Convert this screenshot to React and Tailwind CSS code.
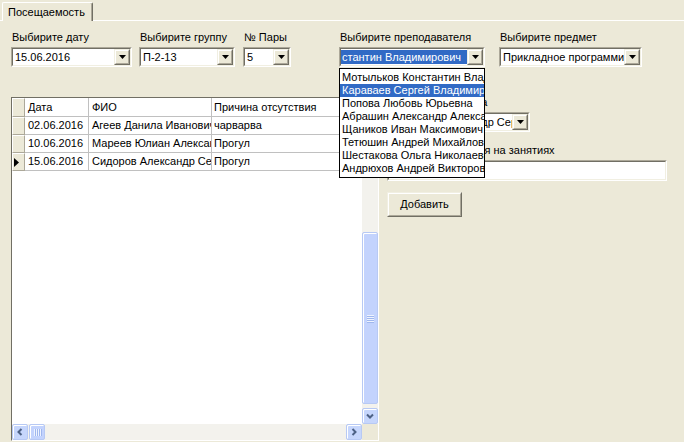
import React from "react";

const teachers = [
  "Мотыльков Константин Владимирович",
  "Караваев Сергей Владимирович",
  "Попова Любовь Юрьевна",
  "Абрашин Александр Александрович",
  "Щаников Иван Максимович",
  "Тетюшин Андрей Михайлович",
  "Шестакова Ольга Николаевна",
  "Андрюхов Андрей Викторович",
];

const rows = [
  ["02.06.2016", "Агеев Данила Иванович", "чарварва"],
  ["10.06.2016", "Мареев Юлиан Александрович", "Прогул"],
  ["15.06.2016", "Сидоров Александр Сергеевич", "Прогул"],
];

function Sunken({ className = "", children }) {
  return (
    <div className={`border border-t-[#aca899] border-l-[#aca899] border-r-white border-b-white ${className}`}>
      <div className="h-full w-full overflow-hidden border border-t-[#716f64] border-l-[#716f64] border-r-[#f1efe2] border-b-[#f1efe2] bg-white">
        {children}
      </div>
    </div>
  );
}

function Raised({ className = "", children }) {
  return (
    <div className={`border border-t-[#f1efe2] border-l-[#f1efe2] border-r-[#716f64] border-b-[#716f64] ${className}`}>
      <div className="flex h-full w-full items-center justify-center border border-t-white border-l-white border-r-[#aca899] border-b-[#aca899] bg-[#ece9d8]">
        {children}
      </div>
    </div>
  );
}

function Combo({ className = "", children, pad = "pl-[2px]" }) {
  return (
    <Sunken className={`h-[20px] ${className}`}>
      <div className="flex h-full">
        <div className={`min-w-0 flex-1 overflow-hidden whitespace-nowrap leading-[16px] ${pad}`}>{children}</div>
        <Raised className="h-[16px] w-[16px] shrink-0">
          <svg width="7" height="4" viewBox="0 0 7 4">
            <path d="M0 0h7L3.5 4z" fill="#000" />
          </svg>
        </Raised>
      </div>
    </Sunken>
  );
}

function Field({ label, className = "", children }) {
  return (
    <div className={className}>
      <div className="h-[13px] whitespace-nowrap pl-[1px] leading-[13px]">{label}</div>
      <div className="mt-[3px]">{children}</div>
    </div>
  );
}

const chevrons = {
  up: "M1 5.5L4 2.5L7 5.5",
  down: "M1 2.5L4 5.5L7 2.5",
  left: "M5.5 1L2.5 4L5.5 7",
  right: "M2.5 1L5.5 4L2.5 7",
};

function ScrollBtn({ dir }) {
  return (
    <div className="flex h-[16px] w-[16px] shrink-0 items-center justify-center rounded-[2px] border border-[#b7c9f4] bg-[#c6d6fc] shadow-[inset_1px_1px_0_#ffffff]">
      <svg width="8" height="8" viewBox="0 0 8 8">
        <path d={chevrons[dir]} fill="none" stroke="#4d6185" strokeWidth="2" />
      </svg>
    </div>
  );
}

function Grip({ vertical }) {
  return (
    <div className={`flex gap-[1px] ${vertical ? "flex-col" : "flex-row"}`}>
      {[0, 1, 2, 3].map((i) => (
        <div key={i} className={vertical ? "h-[1px] w-[7px] bg-[#eef3ff] shadow-[0_1px_0_#9fb7ee]" : "h-[7px] w-[1px] bg-[#eef3ff] shadow-[1px_0_0_#9fb7ee]"} />
      ))}
    </div>
  );
}

export default function App() {
  return (
    <div className="relative h-[442px] w-[684px] overflow-hidden bg-[#ece9d8] font-['Liberation_Sans',Arial,sans-serif] text-[11px] leading-[13px] text-black">
      {/* tab strip */}
      <div className="flex h-[21px]">
        <div className="w-[2px] border-b border-white" />
        <div className="mt-[2px] flex h-[19px] w-[91px] items-center rounded-t-[2px] border-l border-t border-r border-l-white border-t-white border-r-[#716f64] pl-[5px] shadow-[inset_-1px_0_0_#aca899]">
          Посещаемость
        </div>
        <div className="flex-1 border-b border-white" />
      </div>

      {/* filters */}
      <div className="flex pl-[11px] pt-[10px]">
        <Field label="Выбирите дату" className="w-[121px]">
          <Combo>15.06.2016</Combo>
        </Field>
        <Field label="Выбирите группу" className="ml-[7px] w-[96px]">
          <Combo>П-2-13</Combo>
        </Field>
        <Field label="№ Пары" className="ml-[8px] w-[48px]">
          <Combo>5</Combo>
        </Field>
        <Field label="Выбирите преподавателя" className="ml-[48px] w-[146px]">
          <Combo pad="pl-0">
            <div className="my-[1px] h-[14px] bg-[#316ac5] pl-[1px] leading-[14px] text-white">стантин Владимирович</div>
          </Combo>
        </Field>
        <Field label="Выбирите предмет" className="ml-[14px] w-[143px]">
          <Combo>Прикладное программирование</Combo>
        </Field>
      </div>

      {/* main area */}
      <div className="mt-[28px] flex">
        {/* data grid */}
        <div className="ml-[11px] mt-[2px] flex h-[344px] w-[368px] flex-col border border-l-[#716f64] border-t-[#716f64] border-r-white border-b-white bg-white">
          <div className="flex min-h-0 flex-1">
            <div className="min-w-0 flex-1 overflow-hidden">
              <div className="flex h-[19px]">
                <div className="w-[13px] shrink-0 border border-t-white border-l-white border-b-[#aca899] border-r-[#aca899] bg-[#ece9d8]" />
                <div className="w-[64px] shrink-0 border-b border-r border-[#c0c0c0] pl-[3px] leading-[18px]">Дата</div>
                <div className="w-[123px] shrink-0 border-b border-r border-[#c0c0c0] pl-[3px] leading-[18px]">ФИО</div>
                <div className="w-[140px] shrink-0 border-b border-r border-[#c0c0c0] pl-[2px] leading-[18px]">Причина отсутствия</div>
              </div>
              {rows.map((r, i) => (
                <div key={i} className="flex h-[18px]">
                  <div className="flex w-[13px] shrink-0 items-center border border-t-white border-l-white border-b-[#aca899] border-r-[#aca899] bg-[#ece9d8] pl-[1px]">
                    {i === 2 && (
                      <svg width="5" height="9" viewBox="0 0 5 9">
                        <path d="M0 0L5 4.5L0 9z" fill="#000" />
                      </svg>
                    )}
                  </div>
                  <div className="w-[64px] shrink-0 overflow-hidden whitespace-nowrap border-b border-r border-[#c0c0c0] pl-[3px] leading-[17px]">{r[0]}</div>
                  <div className="w-[123px] shrink-0 overflow-hidden whitespace-nowrap border-b border-r border-[#c0c0c0] pl-[3px] leading-[17px]">{r[1]}</div>
                  <div className="w-[140px] shrink-0 overflow-hidden whitespace-nowrap border-b border-r border-[#c0c0c0] pl-[2px] leading-[17px]">{r[2]}</div>
                </div>
              ))}
            </div>
            {/* vertical scrollbar */}
            <div className="flex w-[16px] flex-col bg-[#f3f2ed]">
              <ScrollBtn dir="up" />
              <div className="h-[118px]" />
              <div className="flex h-[172px] items-center justify-center rounded-[2px] border border-[#b7c9f4] bg-[#c3d3fd] shadow-[inset_1px_1px_0_#ffffff]">
                <Grip vertical />
              </div>
              <div className="flex-1" />
              <ScrollBtn dir="down" />
            </div>
          </div>
          {/* horizontal scrollbar */}
          <div className="flex h-[16px]">
            <div className="flex min-w-0 flex-1 bg-[#f3f2ed]">
              <ScrollBtn dir="left" />
              <div className="ml-[1px] flex h-[16px] w-[16px] items-center justify-center rounded-[2px] border border-[#b7c9f4] bg-[#c3d3fd] shadow-[inset_1px_1px_0_#ffffff]">
                <Grip />
              </div>
              <div className="flex-1" />
              <ScrollBtn dir="right" />
            </div>
            <div className="w-[16px] bg-[#ece9d8]" />
          </div>
        </div>

        {/* right panel */}
        <div className="flex-1 pl-[8px] pt-[1px]">
          <div className="h-[13px] whitespace-nowrap pl-[1px] leading-[13px]">Выбирите студента</div>
          <Combo className="mt-[3px] w-[143px]">Сидоров Александр Сергеевич</Combo>
          <div className="mt-[12px] h-[13px] whitespace-nowrap pl-[1px] leading-[13px]">Причина отсутствия на занятиях</div>
          <Sunken className="mt-[3px] h-[21px] w-[280px]" />
          <Raised className="mt-[11px] h-[25px] w-[75px]">Добавить</Raised>
        </div>
      </div>

      {/* open dropdown list */}
      <div className="absolute left-[339px] top-[68px] w-[146px] overflow-hidden border border-black bg-white py-[2px]">
        {teachers.map((t, i) => (
          <div
            key={t}
            className={`h-[13px] overflow-hidden whitespace-nowrap pl-[2px] leading-[13px] ${i === 1 ? "bg-[#316ac5] text-white" : ""}`}
          >
            {t}
          </div>
        ))}
      </div>
    </div>
  );
}
